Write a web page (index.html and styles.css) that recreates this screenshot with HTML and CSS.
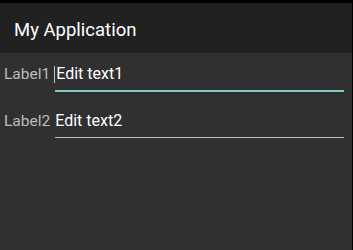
FILE: index.html
```html
<!DOCTYPE html>
<html>
<head>
<meta charset="utf-8">
<link rel="stylesheet" href="styles.css">
</head>
<body>
<div class="screen">
  <div class="status"></div>
  <div class="appbar"><span class="title">My Application</span></div>
  <div class="content">
    <div class="row">
      <span class="label">Label1</span>
      <div class="edit focused"><span class="cursor"></span>Edit text1</div>
    </div>
    <div class="row">
      <span class="label">Label2</span>
      <div class="edit">Edit text2</div>
    </div>
  </div>
</div>
</body>
</html>
```
FILE: styles.css
```css
html, body {
  margin: 0;
  padding: 0;
  background: #000;
}
.screen {
  width: 352px;
  height: 250px;
  background: #303030;
  display: flex;
  flex-direction: column;
  font-family: Roboto, "Liberation Sans", sans-serif;
}
.status {
  height: 3px;
  background: #000;
}
.appbar {
  height: 50px;
  box-sizing: border-box;
  padding-top: 3px;
  background: #212121;
  display: flex;
  align-items: center;
  padding-left: 14px;
}
.title {
  color: #ffffff;
  font-size: 18.5px;
}
.content {
  display: flex;
  flex-direction: column;
  gap: 8px;
}
.row {
  display: flex;
  align-items: flex-start;
  padding-left: 4px;
  gap: 5px;
}
.label {
  color: #bcbcbc;
  font-size: 15.5px;
  line-height: 20px;
  padding-top: 11px;
}
.edit {
  flex: 1;
  margin-right: 8px;
  color: #ffffff;
  font-size: 16px;
  line-height: 20px;
  padding-top: 11px;
  padding-bottom: 6px;
  border-bottom: 1px solid #bdbdbd;
  display: flex;
  align-items: center;
}
.edit.focused {
  border-bottom: 2px solid #80cbc4;
}
.cursor {
  width: 1px;
  height: 17px;
  background: #c8c8c8;
  margin-left: -1px;
  margin-right: 1px;
}
```
